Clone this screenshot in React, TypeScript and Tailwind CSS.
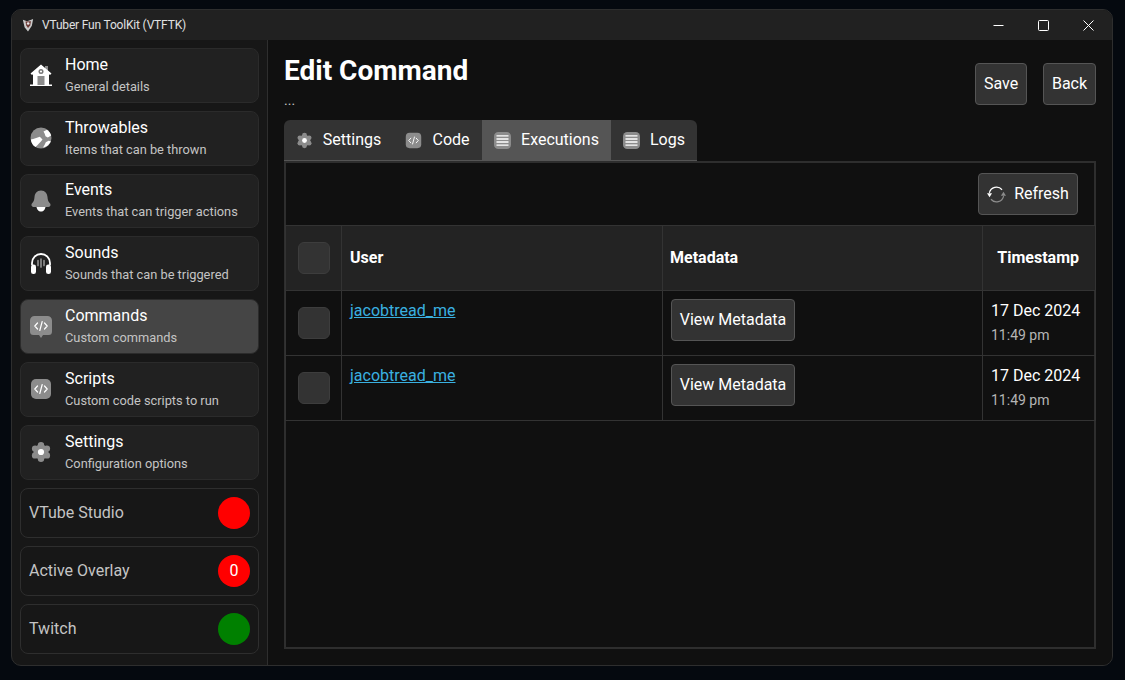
import React from 'react';

type IconProps = { className?: string };

function HomeIcon({ className }: IconProps) {
  return (
    <svg viewBox="0 0 22 22" className={className}>
      <path d="M15 2h3v6h-3z" fill="#8c8c8c" />
      <path d="M0 20.500h22V22H0z" fill="#fff" />
      <path d="M11 .5 21.500 9.500 20 11 19 10.300V21H3V10.300L2 11 .5 9.500Z" fill="#fff" />
      <path d="M7.500 21v-9h7v9z" fill="#8c8c8c" />
      <circle cx="11" cy="7.500" r="2.500" fill="#777" />
      <circle cx="11" cy="7.500" r="1.100" fill="#fff" />
    </svg>
  );
}

function BallIcon({ className }: IconProps) {
  return (
    <svg viewBox="0 0 22 22" className={className}>
      <circle cx="11" cy="11" r="10.500" fill="#8c8c8c" />
      <path d="M.8 12.500C4 12 7 11 9.800 9.800L12.500 12.500C10.500 15 8 17.800 5.500 20 3 18.500 1.200 15.800.8 12.500Z" fill="#fff" />
      <path d="M13.500 4.500 17 2.700C19 4.200 20.500 6.200 21.200 8.500L17.800 10.500 15.500 9.200C15 7.500 14.500 6 13.500 4.500Z" fill="#fff" />
      <path d="M13 20.600C14.200 18.800 15 17.200 15.800 15.300L18.500 13.800 20.800 14.300C19.500 17.600 16.500 20.200 13 20.600Z" fill="#fff" />
    </svg>
  );
}

function BellIcon({ className }: IconProps) {
  return (
    <svg viewBox="0 0 22 22" className={className}>
      <path d="M6.500 16h9c0 3.500-2 5.500-4.500 5.500S6.500 19.500 6.500 16Z" fill="#fff" />
      <path d="M11 .5c4.200 0 6.200 3 6.500 6.500.2 3 .8 4.700 2.400 6.300 1.200 1.300.7 3.700-1.400 3.700h-15C1.400 17 .9 14.600 2.100 13.300 3.700 11.700 4.300 10 4.500 7 4.800 3.500 6.800.5 11 .5Z" fill="#8c8c8c" />
    </svg>
  );
}

function HeadphonesIcon({ className }: IconProps) {
  return (
    <svg viewBox="0 0 22 22" className={className}>
      <path d="M2 12V10a9 9 0 0 1 18 0v2" fill="none" stroke="#fff" strokeWidth="1.800" />
      <rect x="1" y="11.500" width="5" height="9.500" rx="2.300" fill="#fff" />
      <rect x="16" y="11.500" width="5" height="9.500" rx="2.300" fill="#fff" />
      <path d="M8 7.500v5M11 6v8M14 7.500v5" stroke="#8c8c8c" strokeWidth="1.700" strokeLinecap="round" />
    </svg>
  );
}

function CodeGlyph() {
  return <path d="M7.500 8 4.800 11l2.700 3M14.500 8l2.700 3-2.700 3M12.200 6.500l-2.400 9" fill="none" stroke="#fff" strokeWidth="1.200" strokeLinecap="round" strokeLinejoin="round" />;
}

function CommandIcon({ className }: IconProps) {
  return (
    <svg viewBox="0 0 22 22" className={className}>
      <path d="M4.500 0h13A4.500 4.500 0 0 1 22 4.500v11a3.500 3.500 0 0 1-3.500 3.500H13l-2 3-2-3H3.500A3.500 3.500 0 0 1 0 15.500v-11A4.500 4.500 0 0 1 4.500 0Z" fill="#8c8c8c" />
      <g transform="translate(0 -1)"><CodeGlyph /></g>
    </svg>
  );
}

function ScriptIcon({ className }: IconProps) {
  return (
    <svg viewBox="0 0 22 22" className={className}>
      <rect x="1" y="1" width="20" height="20" rx="5" fill="#8c8c8c" />
      <CodeGlyph />
    </svg>
  );
}

function GearIcon({ className }: IconProps) {
  return (
    <svg viewBox="0 0 22 22" className={className}>
      <circle cx="11" cy="11" r="7.500" fill="#8c8c8c" />
      <circle cx="11" cy="4.200" r="3.200" fill="#8c8c8c" />
      <circle cx="11" cy="17.800" r="3.200" fill="#8c8c8c" />
      <circle cx="5.100" cy="7.600" r="3.200" fill="#8c8c8c" />
      <circle cx="16.900" cy="7.600" r="3.200" fill="#8c8c8c" />
      <circle cx="5.100" cy="14.400" r="3.200" fill="#8c8c8c" />
      <circle cx="16.900" cy="14.400" r="3.200" fill="#8c8c8c" />
      <circle cx="11" cy="11" r="3.100" fill="#fff" />
    </svg>
  );
}

function ListIcon({ className }: IconProps) {
  return (
    <svg viewBox="0 0 24 24" className={className}>
      <rect x="0" y="0" width="24" height="24" rx="6" fill="#8c8c8c" />
      <path d="M3.500 5.500h17M3.500 9.800h17M3.500 14.200h17M3.500 18.500h17" stroke="#fff" strokeWidth="2" />
    </svg>
  );
}

function RefreshIcon({ className }: IconProps) {
  return (
    <svg viewBox="0 0 24 24" className={className}>
      <path d="M3 10a9.200 9.200 0 0 1 16-4" fill="none" stroke="#fff" strokeWidth="1.500" />
      <path d="M21 14a9.200 9.200 0 0 1-16 4" fill="none" stroke="#8c8c8c" strokeWidth="1.500" />
      <path d="M20.800 8.500 24 13.500h-6.400Z" fill="#8c8c8c" />
      <path d="M3.200 15.500 0 10.500h6.400Z" fill="#fff" />
    </svg>
  );
}

function AppLogo() {
  return (
    <svg viewBox="0 0 14 16" className="w-[12px] h-[14px]">
      <path d="M1 2 6 3.500 13 1 11.500 9 7 15.500 3 10.500Z" fill="#c9c9c9" />
      <path d="M4 4 10.500 3.500 9.500 8.500 7 11.500 5 8.500Z" fill="#6e3a36" />
      <circle cx="7.200" cy="6.200" r="1.500" fill="#e8e8e8" />
    </svg>
  );
}

function WindowControls() {
  return (
    <div className="ml-auto flex items-center gap-[34px] pr-[18px]">
      <svg viewBox="0 0 11 11" className="w-[11px] h-[11px]">
        <path d="M.5 5.500h10" stroke="#fff" strokeWidth="1" />
      </svg>
      <svg viewBox="0 0 11 11" className="w-[11px] h-[11px]">
        <rect x=".5" y=".5" width="10" height="10" rx="1" fill="none" stroke="#fff" strokeWidth="1" />
      </svg>
      <svg viewBox="0 0 11 11" className="w-[11px] h-[11px]">
        <path d="M.5.500l10 10M10.500.5l-10 10" stroke="#fff" strokeWidth="1" />
      </svg>
    </div>
  );
}

const navItems = [
  { title: 'Home', sub: 'General details', icon: HomeIcon },
  { title: 'Throwables', sub: 'Items that can be thrown', icon: BallIcon },
  { title: 'Events', sub: 'Events that can trigger actions', icon: BellIcon },
  { title: 'Sounds', sub: 'Sounds that can be triggered', icon: HeadphonesIcon },
  { title: 'Commands', sub: 'Custom commands', icon: CommandIcon, active: true },
  { title: 'Scripts', sub: 'Custom code scripts to run', icon: ScriptIcon },
  { title: 'Settings', sub: 'Configuration options', icon: GearIcon },
];

const statusItems = [
  { label: 'VTube Studio', color: 'bg-[#ff0000]', value: '' },
  { label: 'Active Overlay', color: 'bg-[#ff0000]', value: '0' },
  { label: 'Twitch', color: 'bg-[#008000]', value: '' },
];

const tabs = [
  { label: 'Settings', icon: GearIcon, width: 'w-[109px]' },
  { label: 'Code', icon: ScriptIcon, width: 'w-[89px]' },
  { label: 'Executions', icon: ListIcon, active: true, width: 'w-[129px]' },
  { label: 'Logs', icon: ListIcon, width: 'w-[86px]' },
];

const rows = [1, 2];

function Sidebar() {
  return (
    <aside className="w-[256px] shrink-0 border-r border-[#2e2e2e] pt-2 pl-2 pr-2 flex flex-col gap-[8px]">
      {navItems.map((item) => (
        <div
          key={item.title}
          className={`h-[54.8px] flex items-center rounded-lg border border-[#2b2b2b] ${item.active ? 'bg-[#454545]' : 'bg-[#212121]'}`}
        >
          <div className="w-[44px] pl-[9px] shrink-0">
            <item.icon className="w-[22px] h-[22px]" />
          </div>
          <div className="-mt-[2px]">
            <div className="text-[16px] leading-[24px] text-white">{item.title}</div>
            <div className="text-[12.8px] leading-[19px] text-[#c4c4c4]">{item.sub}</div>
          </div>
        </div>
      ))}
      {statusItems.map((s) => (
        <div key={s.label} className="h-[50px] flex items-center justify-between rounded-lg border border-[#2e2e2e] pl-2 pr-2">
          <span className="text-[16px] text-[#c4c4c4]">{s.label}</span>
          <span className={`w-[32px] h-[32px] rounded-full flex items-center justify-center text-[16px] text-white ${s.color}`}>{s.value}</span>
        </div>
      ))}
    </aside>
  );
}

function ActionButton({ children, className = '' }: { children: React.ReactNode; className?: string }) {
  return (
    <button className={`h-[42px] rounded border border-[#555] bg-[#333] text-white text-[16px] flex items-center justify-center ${className}`}>
      {children}
    </button>
  );
}

function ExecutionsTable() {
  return (
    <table className="-ml-[1px] w-[810px] table-fixed border-collapse text-[16px]">
      <colgroup>
        <col className="w-[56px]" />
        <col className="w-[321px]" />
        <col className="w-[320px]" />
        <col className="w-[113px]" />
      </colgroup>
      <thead>
        <tr className="h-[65px] bg-[#232323] text-white">
          <th className="border border-[#333] pl-3 text-left">
            <div className="w-[32px] h-[32px] rounded-md bg-[#333] border border-[#3d3d3d]" />
          </th>
          <th className="border border-[#333] pl-2 text-left font-bold">User</th>
          <th className="border border-[#333] pl-[7px] text-left font-bold">Metadata</th>
          <th className="border border-[#333] pr-[16px] text-right font-bold">Timestamp</th>
        </tr>
      </thead>
      <tbody>
        {rows.map((row) => (
          <tr key={row} className="h-[65px]">
            <td className="border border-[#333] pl-3 align-middle">
              <div className="w-[32px] h-[32px] rounded-md bg-[#333] border border-[#3d3d3d]" />
            </td>
            <td className="border border-[#333] pl-2 pt-[10px] align-top">
              <a href="#" className="text-[#3ab0e0] underline leading-[20px] block">jacobtread_me</a>
            </td>
            <td className="border border-[#333] pl-2 pt-2 align-top">
              <ActionButton className="w-[124px]">View Metadata</ActionButton>
            </td>
            <td className="border border-[#333] pl-2 align-top pt-[10px]">
              <div className="text-white leading-[20px]">17 Dec 2024</div>
              <div className="text-[14px] leading-[18px] mt-[5px] text-[#b5b5b5]">11:49 pm</div>
            </td>
          </tr>
        ))}
      </tbody>
    </table>
  );
}

function Main() {
  return (
    <main className="flex-1 min-w-0 bg-[#101010] pl-4 pr-4 pt-[14px]">
      <div className="flex justify-between h-[66px]">
        <div>
          <h1 className="text-[28px] leading-[33px] font-bold text-white">Edit Command</h1>
          <p className="text-[14px] leading-[16px] mt-[5px] text-[#c4c4c4]">...</p>
        </div>
        <div className="flex gap-4 pt-[9px]">
          <ActionButton className="w-[52px]">Save</ActionButton>
          <ActionButton className="w-[53px]">Back</ActionButton>
        </div>
      </div>
      <div className="flex w-fit h-[41px] rounded-t-md overflow-hidden bg-[#333] border-b border-[#555]">
        {tabs.map((tab) => (
          <div
            key={tab.label}
            className={`${tab.width} flex items-center justify-center gap-[10px] text-[16px] text-white ${tab.active ? 'bg-[#555]' : ''}`}
          >
            <tab.icon className="w-[17px] h-[17px]" />
            {tab.label}
          </div>
        ))}
      </div>
      <div className="h-[488px] border-2 border-[#2e2e2e]">
        <div className="h-[62px] flex items-start justify-end pt-[10px] pr-[16px]">
          <ActionButton className="w-[100px] gap-[8px]">
            <RefreshIcon className="w-[19px] h-[19px]" />
            Refresh
          </ActionButton>
        </div>
        <ExecutionsTable />
      </div>
    </main>
  );
}

export default function App() {
  return (
    <div className="w-[1125px] h-[680px] overflow-hidden bg-[#05090f] pl-[11px] pt-[9px] font-['Roboto',sans-serif]">
      <div className="w-[1102px] h-[657px] rounded-[10px] border border-[#2e2e2e] bg-[#171717] overflow-hidden flex flex-col">
        <header className="h-[30px] shrink-0 bg-[#212121] flex items-center pl-[10px] text-[12px] tracking-[-0.18px] text-[#e0e0e0]">
          <AppLogo />
          <span className="ml-[8px]">VTuber Fun ToolKit (VTFTK)</span>
          <WindowControls />
        </header>
        <div className="flex flex-1 min-h-0">
          <Sidebar />
          <Main />
        </div>
      </div>
    </div>
  );
}
